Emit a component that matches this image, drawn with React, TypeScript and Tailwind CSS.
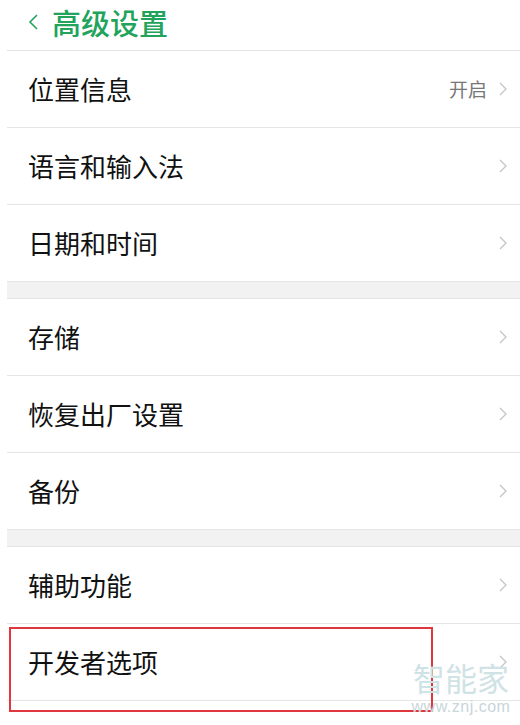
import React from 'react';

const font = { fontFamily: '"Noto Sans CJK SC", "Noto Sans", sans-serif' };

type Item = { label: string; value?: string; highlight?: boolean };

const groups: Item[][] = [
  [{ label: '位置信息', value: '开启' }, { label: '语言和输入法' }, { label: '日期和时间' }],
  [{ label: '存储' }, { label: '恢复出厂设置' }, { label: '备份' }],
  [{ label: '辅助功能' }, { label: '开发者选项', highlight: true }],
];

function Chevron({ className = '' }: { className?: string }) {
  return (
    <svg width="8" height="14" viewBox="0 0 8 14" className={className}>
      <path d="M1 1l6 6-6 6" fill="none" stroke="currentColor" strokeWidth="1.3" />
    </svg>
  );
}

function Row({ item }: { item: Item }) {
  return (
    <div className="relative h-[77px] flex items-center border-b border-[#e6e6e6] pl-[21px] pr-[13px]">
      <span className="text-[26px] leading-none text-[#111111]">{item.label}</span>
      <div className="ml-auto flex items-center gap-[12px]">
        {item.value && <span className="text-[19px] text-[#777777]">{item.value}</span>}
        <Chevron className="text-[#c4c4c4]" />
      </div>
      {item.highlight && (
        <div className="absolute left-[2px] top-[3px] w-[424px] h-[85px] border-2 border-[#e0363d]" />
      )}
    </div>
  );
}

export default function App() {
  return (
    <div className="w-[520px] h-[725px] bg-white overflow-hidden relative" style={font}>
      <div className="pl-[7px]">
        {/* Header */}
        <div className="h-[51px] flex items-center border-b border-[#e3e3e3] pl-[21px] pb-[6px]">
          <svg width="11" height="18" viewBox="0 0 11 18" className="text-[#22a35c]">
            <path d="M9 2L2 9l7 7" fill="none" stroke="currentColor" strokeWidth="1.6" />
          </svg>
          <span className="ml-[13px] text-[29px] leading-none font-medium text-[#22a35c]">高级设置</span>
        </div>

        {groups.map((group, gi) => (
          <div key={gi}>
            {gi > 0 && <div className="h-[17px] bg-[#f2f2f2] border-b border-[#e6e6e6]" />}
            {group.map((item) => (
              <Row key={item.label} item={item} />
            ))}
          </div>
        ))}
      </div>

      {/* Watermark */}
      <div className="absolute left-[408px] top-[661px] w-[106px] flex flex-col items-center pointer-events-none whitespace-nowrap">
        <span className="text-[32px] leading-none text-[#cfe2e5]">智能家</span>
        <span
          className="mt-[6px] text-[16px] leading-none text-[#c9d6da] tracking-[0.5px]"
          style={{ fontFamily: '"Liberation Sans", sans-serif' }}
        >
          www.znj.com
        </span>
      </div>
    </div>
  );
}
